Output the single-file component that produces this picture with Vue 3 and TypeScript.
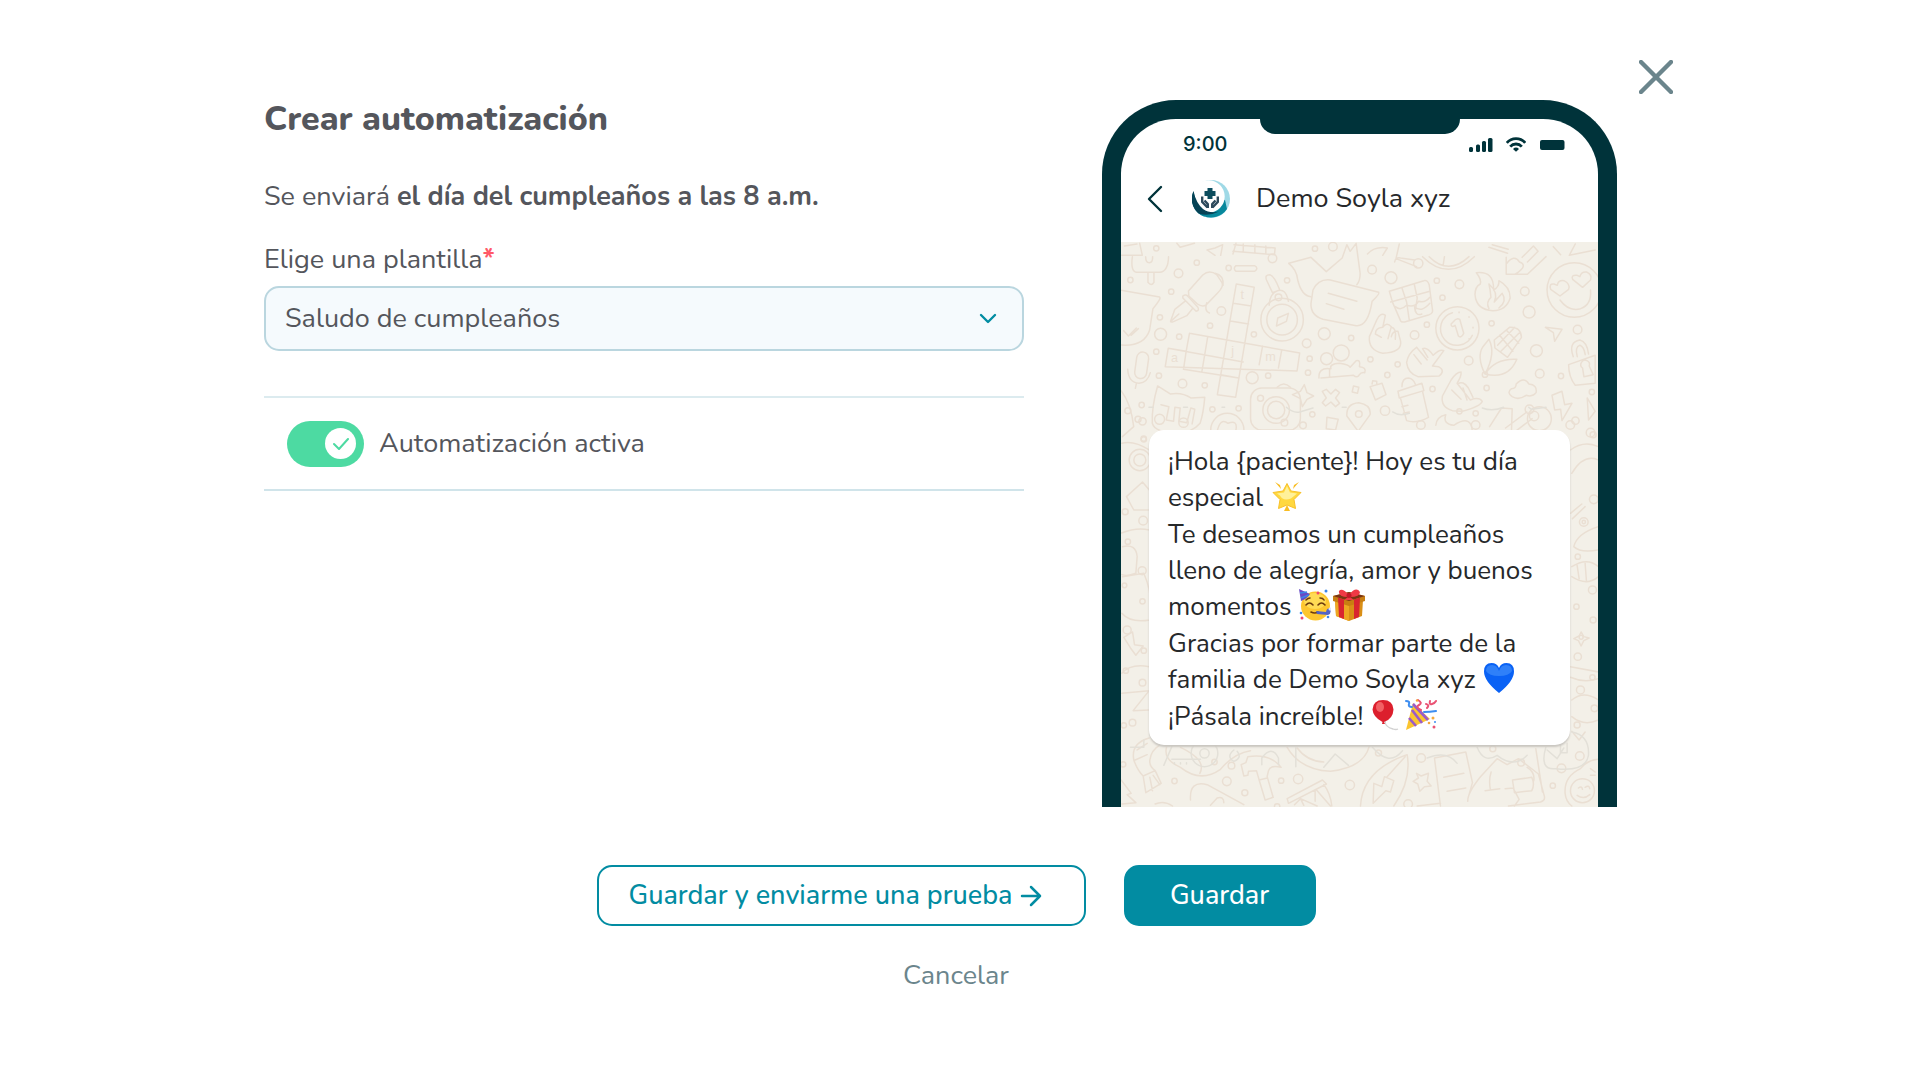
<script setup lang="ts">
import { ref } from 'vue'

interface Dot {
  x: number
  y: number
  r: number
}

const templates: string[] = ['Saludo de cumpleaños']
const selected = ref<string>(templates[0])
const active = ref<boolean>(true)
const clinic = 'Demo Soyla xyz'
const patientTag = '{paciente}'

const toDots = (list: number[][]): Dot[] => list.map(([x, y, r]) => ({ x, y, r }))

const upperDots = toDots([
  [90, 120, 8], [168, 25, 8], [235, 100, 13], [290, 68, 8], [213, 155, 8], [179, 232, 8], [364, 213, 13],
  [330, 257, 8], [181, 283, 18], [237, 290, 8], [168, 335, 8], [176, 407, 8], [247, 431, 13], [314, 436, 8],
  [386, 84, 8], [462, 283, 8], [457, 413, 18], [505, 407, 8], [124, 495, 8], [562, 121, 8], [674, 281, 18],
  [621, 310, 13], [630, 356, 8], [625, 398, 8], [755, 294, 8], [646, 26, 8], [700, 20, 13], [518, 55, 13],
  [818, 89, 13], [875, 113, 18], [1013, 122, 8], [1081, 133, 13], [1030, 173, 8], [983, 254, 8], [946, 285, 13],
  [813, 358, 8], [895, 373, 8], [864, 405, 8], [1000, 447, 8], [1109, 362, 13], [1163, 444, 8], [1178, 250, 8],
  [1278, 154, 13], [1291, 216, 18], [1437, 269, 13], [1313, 332, 18], [1323, 401, 13], [1387, 408, 8],
  [1480, 456, 8], [482, 475, 9], [337, 508, 8], [857, 512, 14], [1130, 520, 8], [1081, 514, 8], [1292, 508, 13],
  [638, 523, 8], [113, 538, 9], [178, 538, 15], [250, 548, 14], [416, 505, 8], [554, 548, 10], [610, 556, 10],
  [1130, 555, 13], [1415, 555, 13], [1476, 578, 13], [965, 555, 13], [130, 596, 8]
])

const lowerDots = toDots([
  [192, 153, 8], [349, 154, 13], [403, 188, 9], [512, 152, 8], [563, 147, 14], [718, 165, 14], [932, 84, 13],
  [893, 222, 13], [1327, 167, 8], [1353, 115, 13], [1408, 78, 13], [1232, 98, 10], [1147, 56, 9], [363, 107, 10],
  [312, 96, 8], [804, 69, 9], [38, 103, 8], [500, 229, 8]
])

const sideDots = toDots([
  [52, 32, 9], [96, 64, 11], [100, 118, 8], [44, 335, 9], [98, 362, 13], [52, 425, 8], [95, 512, 12],
  [42, 556, 7], [96, 604, 8], [50, 690, 12], [100, 752, 8], [46, 812, 8], [96, 848, 10], [66, 968, 10],
  [40, 976, 8], [1395, 62, 11], [1448, 104, 9], [1450, 298, 13], [1420, 366, 13], [1420, 366, 5], [1402, 470, 8],
  [1446, 570, 12], [1398, 620, 8], [1412, 712, 6], [1448, 660, 9], [1402, 770, 11], [1446, 832, 8],
  [1410, 870, 12], [1452, 925, 10], [1400, 975, 9]
])
</script>

<template>
  <main class="page">
    <section class="dialog" aria-labelledby="dialog-title">
      <div class="top">
        <button type="button" class="close" aria-label="Cerrar">
          <svg viewBox="0 0 34 34" width="34" height="34" aria-hidden="true">
            <path d="M2 2 32 32M32 2 2 32" fill="none" stroke="currentColor" stroke-width="4.400" stroke-linecap="round" />
          </svg>
        </button>
      </div>

      <div class="body">
        <form class="form" @submit.prevent>
          <h1 id="dialog-title">Crear automatización</h1>
          <p class="schedule">Se enviará <strong>el día del cumpleaños a las 8 a.m.</strong></p>
          <label class="field-label" for="template">Elige una plantilla<span class="required">*</span></label>
          <div class="select-wrap">
            <select id="template" v-model="selected">
              <option v-for="item in templates" :key="item">{{ item }}</option>
            </select>
            <svg class="caret" viewBox="0 0 18 12" width="18" height="12" aria-hidden="true">
              <path d="M2 2 9 9 16 2" fill="none" stroke="currentColor" stroke-width="2.4" stroke-linecap="round" stroke-linejoin="round" />
            </svg>
          </div>
          <div class="toggle-row">
            <label class="toggle" for="active">
              <input id="active" v-model="active" type="checkbox" role="switch" />
              <span class="knob">
                <svg viewBox="0 0 16 12" width="16" height="12" aria-hidden="true">
                  <path d="M1 6 6 11 15 1" fill="none" stroke="currentColor" stroke-width="2" stroke-linecap="round" stroke-linejoin="round" />
                </svg>
              </span>
            </label>
            <label for="active">Automatización activa</label>
          </div>
        </form>

        <aside class="phone">
          <div class="notch"></div>
          <div class="status">
            <span>9:00</span>
            <svg viewBox="0 0 96 16" width="96" height="16" aria-hidden="true" fill="currentColor">
              <rect x="0" y="11" width="4" height="5" rx="1.500" />
              <rect x="7" y="8.500" width="4" height="7.500" rx="1.500" />
              <rect x="13" y="5" width="4" height="11" rx="1.500" />
              <rect x="19" y="2" width="4.500" height="14" rx="1.500" />
              <g fill="none" stroke="currentColor" stroke-width="2.800">
                <path d="M37.800 6.800a12.200 12.200 0 0 1 18.400 0" />
                <path d="M41.200 10.600a7.800 7.800 0 0 1 11.600 0" />
              </g>
              <path d="M47 15.800 44 12.900a4.400 4.400 0 0 1 6 0z" />
              <rect x="71" y="4" width="24.500" height="10" rx="2" />
            </svg>
          </div>
          <div class="contact">
            <svg class="back" viewBox="0 0 16 28" width="16" height="28" aria-hidden="true">
              <path d="M14 2 2 14 14 26" fill="none" stroke="currentColor" stroke-width="2.400" stroke-linecap="round" stroke-linejoin="round" />
            </svg>
            <svg class="logo" viewBox="0 0 38 38" width="38" height="38" aria-hidden="true">
              <circle cx="19" cy="19" r="19" fill="#9fd9e6" />
              <path d="M1 13A19 19 0 0 0 35 29L33 20 16 16Z" fill="#07889c" />
              <circle cx="16.500" cy="16.500" r="16.200" fill="#fff" />
              <path d="M1.500 11.500A19 19 0 0 0 12 36.600L26 32Q33 26 33.500 21 32 33 20 34 5 33 1.500 11.500Z" fill="#07889c" />
              <path d="M1.500 11A19 19 0 0 0 6.500 33.500Q16 37 27 31.500 18 34 11 29 4 23 1.500 11Z" fill="#064356" />
              <path d="M15.500 8h5v3h3v5h-3v3h-5v-3h-3v-5h3z" fill="#0c4d5e" />
              <g fill="none" stroke="#2d4a5c" stroke-width="2.400" stroke-linejoin="round">
                <path d="M10.200 16.500v5.500l5.300 5.500M15.800 28v-4l-3.300-3.500" />
                <path d="M25.800 16.500v5.500l-5.300 5.500M20.200 28v-4l3.300-3.500" />
              </g>
            </svg>
            <span>{{ clinic }}</span>
          </div>

          <div class="chat">
            <svg class="wallpaper" viewBox="0 0 478 565" preserveAspectRatio="xMidYMin slice" aria-hidden="true">
              <g fill="none" stroke="#eadfd3" stroke-width="4.500" stroke-linejoin="round" stroke-linecap="round" font-family="Liberation Sans, sans-serif">
                <g transform="translate(-20 -2) scale(.332 .3333)">
                  <circle v-for="(d, i) in upperDots" :key="i" :cx="d.x" :cy="d.y" :r="d.r" />
                  <path d="M62 46H126L118 10M72 18 110 12M230 10 240 22 283 10M321 30 345 24 368 14 362 46M321 30 345 46M408 10 399 42 M399 34 524 44 526 24 402 14 M430 12v24M465 14v24M498 18v22" />
                  <path d="M96 50Q90 94 108 97L178 97Q204 94 205 50M136 50q0 18 11 18t10-18M143 97v30q10 13 18 0V97" />
                  <path d="M62 151 178 171Q184 176 158 206L148 270Q132 320 62 315M70 272l14 16 24-24M92 286l22-20" />
                  <path d="M265 153 308 105Q328 88 350 104L366 128Q372 140 352 160L318 195Q306 202 292 192L266 168ZM345 100Q372 106 369 136M320 188Q312 214 328 219" />
                  <path d="M248 168q10-8 18 4l26 28q8 12-4 14l-40-40ZM254 184l-30 24-13 36q2 4 9 1l40-18 18-22M214 242l22-20" />
                  <path d="M409 132 463 142 407 472 352 464ZM400 190 454 198M391 243 446 252M362 404 416 414M268 280 436 310 600 339 592 393 195 380 204 325 430 366M204 325 258 334 268 280M323 290 305 397M258 334 250 388M488 319 478 374M546 329 536 384M250 388 416 414" />
                  <circle cx="547" cy="239" r="64" /><circle cx="547" cy="239" r="46" /><circle cx="536" cy="172" r="10" />
                  <path d="M508 196Q510 160 534 152T566 184M500 120Q494 104 510 104 524 108 540 150L518 158ZM530 258 534 234 566 220 560 244ZM408 77h56q14 8 0 17h-56q-10-8 0-17Z" />
                  <path d="M567 70 634 52 680 95 728 54 742 14 752 34 770 10 782 100Q782 124 772 134M567 70Q592 90 594 120 606 168 634 170" />
                  <path d="M640 150Q656 116 692 120L838 157Q842 162 818 184 806 260 770 257L670 238Q632 226 634 190ZM686 160 772 184M680 191 733 208" />
                  <path d="M870 154 974 122Q984 118 990 134L1000 210Q1002 220 990 224L916 246Q904 248 902 238L880 188ZM908 144 922 186 930 240M945 132 954 174 948 214M874 186 992 154M888 200q16 14 34-4 24 8 36-12 20 6 34-12M946 200q20 20 46-10M946 200q2 30 22 22" />
                  <path d="M804 42Q826 18 864 24L850 46M900 12 890 56 952 80M886 66Q888 50 904 54L946 60M970 50Q1048 126 1126 50M990 50Q1048 108 1110 50M1036 50 1032 76" /><circle cx="957" cy="70" r="14" />
                  <path d="M1132 98Q1186 92 1184 150 1202 140 1200 122 1234 140 1234 174 1222 212 1182 212 1132 210 1128 164 1128 140 1144 132 1148 118 1132 98ZM1170 206Q1160 186 1176 172 1174 148 1170 132 1200 158 1186 186L1210 160Q1226 184 1200 204" />
                  <path d="M1170 22 1226 40M1180 14 1228 28M1222 52V103H1286L1342 50M1224 70Q1246 42 1262 66 1290 76 1250 102M1270 52 1304 18 1318 34 1286 66M1364 20 1386 44M1430 12 1412 46 1490 30" />
                  <circle cx="1427" cy="150" r="82" /><path d="M1384 180Q1410 216 1446 206 1480 194 1476 150M1384 168 1356 148Q1350 130 1366 132L1376 136Q1378 120 1396 122 1416 132 1410 148ZM1452 142 1422 118Q1416 104 1436 106L1444 110Q1448 94 1464 96 1482 104 1476 120Z" />
                  <path d="M858 226Q842 216 832 240L810 290Q806 330 850 340 908 338 904 304L896 274Q880 272 876 290M858 226 850 262Q828 264 828 282L846 292M850 262Q862 244 876 260L866 296M876 262Q892 264 888 298" />
                  <circle cx="1075" cy="265" r="65" /><path d="M1120 286A50 50 0 1 1 1060 218M1110 230v2M1122 262v2M1110 296v2M1080 216v2M1062 246Q1072 232 1082 238L1094 280Q1086 296 1078 288L1068 256Q1056 264 1056 252Z" />
                  <path d="M1158 402Q1132 350 1152 320L1170 298Q1192 340 1158 402ZM1158 402Q1190 354 1254 358 1228 420 1158 402ZM1186 300 1232 262Q1266 260 1268 292L1226 352 1188 324ZM1196 316 1248 262M1206 334 1264 276M1202 286 1242 334M1222 270 1260 310" /><circle cx="1158" cy="404" r="8" />
                  <path d="M1340 262 1390 268 1368 304 1364 278ZM1410 374 1490 346V430L1430 436Q1410 410 1410 374ZM1424 350Q1408 306 1444 300 1466 306 1470 342M1436 350Q1428 320 1444 316 1456 320 1460 344M1452 384a13 13 0 1 1 20-6l12 26-28 6z" />
                  <rect x="106" y="336" width="36" height="80" rx="18" transform="rotate(8 124 376)" /><path d="M82 388Q84 428 116 430 142 428 150 398M108 431l-3 14" />
                  <circle cx="681" cy="356" r="18" /><circle cx="725" cy="339" r="24" /><path d="M658 414Q656 384 688 386H694Q688 372 720 370 748 374 752 382L770 362Q784 358 780 380 802 382 796 398 784 396 780 404 774 416 762 406L664 414M690 388v24" />
                  <path d="M952 322Q926 340 922 368 926 400 956 410L1020 408Q1040 392 1018 380L1000 378 1034 332Q1022 326 1002 346 984 320 970 326L986 352M952 322 984 360M944 344 966 372M1040 370" />
                  <path d="M1086 396Q1072 396 1056 420L1030 468Q1024 502 1060 512L1090 514Q1144 500 1150 484 1140 470 1114 480L1074 430Q1088 408 1086 396M1058 450 1086 478M1076 432Q1092 420 1108 444L1122 472M1092 444 1104 480" />
                  <path d="M172 438 210 462Q246 456 272 474L314 472Q310 520 300 550 276 578 230 580 164 578 156 550 154 500 172 438ZM182 494l24 6-8 40 22 4 4-42 16 2-4 40 24 4 12-44 12 4-8 44" />
                  <rect x="452" y="444" width="150" height="126" rx="34" /><circle cx="529" cy="510" r="40" /><circle cx="529" cy="510" r="26" /><path d="M532 442q20-20 40 0M578 464l24-10 12-20 8 24 20 10-20 10-14 22-6-24z" />
                  <path d="M668 454 680 448 694 462 708 448 720 458 708 474 720 490 708 500 694 486 678 498 668 488 680 474ZM762 438 778 442 774 460 758 456ZM812 440 848 430 860 464 828 480ZM818 432l2-10 12 2v10" />
                  <path d="M896 454 968 430 974 452 900 474ZM908 440Q908 414 928 414 942 416 948 432M904 476 922 542Q950 552 988 532L970 454M908 500l18-4M912 520l18-4" />
                  <path d="M1240 470Q1222 458 1238 446 1252 446 1252 432 1276 408 1290 432 1316 434 1312 458 1302 472 1282 466 1260 482 1240 470ZM1360 466 1390 454 1398 494 1420 490 1390 542 1386 508 1368 510ZM1466 474 1490 514 1470 540Z" />
                  <circle cx="382" cy="570" r="50" /><path d="M350 580q10-50 34-30 30-12 24 20M776 574 742 528Q740 490 778 488 816 494 812 524ZM682 532 716 538 708 570 680 566ZM62 452Q92 490 100 560L66 590M1010 556Q1012 530 1040 524 1030 552 1064 556 1120 520 1120 580M1172 560 1208 504 1240 506 1238 570M1220 564 1284 516M1250 574 1300 536" /><circle cx="778" cy="522" r="10" /><circle cx="1322" cy="536" r="36" /><circle cx="1306" cy="528" r="14" />
                  <g stroke="#e3e0d8"><path d="M146 502h12M250 502h12M366 502h8M560 502Q580 520 600 516L640 504M728 502h12M880 516Q900 530 930 520M1150 504Q1180 516 1214 502M1290 502l8 6 44-6" /></g>
                  <g fill="#eadfd3" stroke="none" font-size="38"><text x="422" y="178">t</text><text x="394" y="344">j</text><text x="212" y="366">a</text><text x="496" y="362">m</text></g>
                </g>
                <g transform="translate(-10 158) scale(.3333)">
                  <circle v-for="(d, i) in sideDots" :key="i" :cx="d.x" :cy="d.y" :r="d.r" />
                  <circle cx="88" cy="180" r="32" /><circle cx="88" cy="180" r="18" />
                  <path d="M34 130Q70 120 116 150M48 290 96 246 130 286V330H70ZM30 400Q80 380 116 390M36 440Q76 430 80 470L76 520Q50 530 34 524M36 530 100 520Q130 590 118 660 60 670 34 640M40 712 66 696 72 734 98 738 76 766 60 744ZM34 880 116 872 68 932 116 930M34 820Q60 790 116 800" />
                  <path d="M1380 150Q1420 120 1464 140M1384 220Q1420 160 1464 180M1380 340 1414 312M1386 356 1424 320M1464 380Q1400 400 1390 440 1410 460 1464 450M1384 500Q1430 470 1464 500M1384 530Q1430 560 1464 530M1400 496l6 40M1424 490l4 54M1412 696l8 14 16 4-16 8-8 16-8-16-14-6 16-8ZM1380 800 1464 816M1380 832Q1420 850 1464 836M1384 900Q1420 870 1464 900V960Q1420 980 1384 950" />
                </g>
                <g transform="translate(-10 488) scale(.3333)">
                  <circle v-for="(d, i) in lowerDots" :key="i" :cx="d.x" :cy="d.y" :r="d.r" />
                  <path d="M116 24Q60 40 70 90 80 120 98 138L106 188 152 160 134 122Q116 110 118 90 122 60 150 44M80 60 110 40M74 90 110 74M98 138 134 122M118 142l8 40M128 136l20 28" />
                  <path d="M168 52Q158 90 210 112 270 160 330 118 370 70 420 62M210 52Q290 90 268 130M32 150 62 190 50 194 76 218 34 222M240 210Q236 150 290 164L400 224M300 226l20-22q20-6 20 14M134 222Q160 210 186 228" />
                  <path d="M392 104 406 98 412 80Q480 70 512 112 480 104 474 122L470 140 488 202 464 210 446 150 438 122 414 124 412 136 400 138ZM446 150l24-6M530 52Q570 120 660 124 760 112 776 50M560 54Q590 94 640 96M530 206 636 150 648 162 534 220ZM552 224 570 206 620 228M570 206 580 226M618 180 660 228M640 164Q660 190 664 228M614 182V214" />
                  <path d="M750 228Q756 120 890 74 904 150 850 228M788 220 790 160 814 170 822 140 850 152 840 186 826 182ZM830 140 884 80M918 130l14 8 22-8-4 24 12 14-20 2-14 14-6-22-14-8 16-10ZM972 84 1066 66 1086 158 1074 200M972 84 990 228M1000 142 1060 130M1010 184 1066 174M920 228l70-8M1072 214Q1070 190 1110 140L1160 86 1190 104 1224 86 1284 132 1302 200Q1304 212 1290 216L1194 228M1140 180Q1134 150 1142 126M1124 182l44-6M1184 176l24-2 18 34-14 20M1206 150l58-8q10 20 0 40l-52 6zM1250 112q24 14 20 40M1276 56l20 130" />
                  <circle cx="1416" cy="182" r="36" /><path d="M1464 88Q1430 90 1410 116 1360 140 1364 190 1366 214 1384 228M1404 174q10-8 12 4M1424 172q12-8 14 4M1400 196q20 14 38-2M1440 116l14 10M1440 136h14M1384 4l22 26 18-24" />
                  <g stroke="#e3e0d8"><path d="M60 52h40v-22M160 106 184 50M184 88H270M192 98v4M210 98v4M228 98v4M370 60q-24 20 0 34 26-10 10-30M454 104V84q30-40 50 0v20M556 54v56M640 112l34-40 40 34M786 52q50 60 90 10M950 84q60-24 90 16M1100 52q20 50 60 24 50 40 90 0M1306 52q-20 70 30 64 90 10 98-40 4-60-50-70M1310 60l30 26 20-32M1350 44v24h20V40" /><circle cx="282" cy="70" r="40" /><circle cx="282" cy="70" r="14" /></g>
                </g>
              </g>
            </svg>

            <div class="bubble">
              <p>¡Hola {{ patientTag }}! Hoy es tu día especial
                <svg class="emoji" viewBox="0 0 32 32" role="img" aria-label="estrella brillante">
                  <g fill="#f9bd22"><path d="m4 2 5 3 1 4zM28 2l-5 3-1 4zM16 25l-3 6h6z" /></g>
                  <path d="M16 3.500 20 11l10 1.500-7 7 1.500 9L16 25l-8.500 3.500L9 19.500l-7-7L12 11z" fill="#ffd83f" stroke="#f8c12b" stroke-linejoin="round" />
                  <path d="M16 6 19 12.500l7 1-6 5q-8 3-11-3l-3-2 7-1z" fill="#fff19a" />
                </svg>
              </p>
              <p>Te deseamos un cumpleaños lleno de alegría, amor y buenos momentos
                <svg class="emoji" viewBox="0 0 32 32" role="img" aria-label="cara de fiesta">
                  <circle cx="16.500" cy="17" r="14.500" fill="#fdc62f" /><ellipse cx="16" cy="12" rx="11" ry="8" fill="#ffdb55" />
                  <path d="M0 0 11 5Q8 10 2 12z" fill="#6a4bc4" /><path d="m1 4 7-1M2 9l8-3" stroke="#3b86e8" stroke-width="1.500" />
                  <g fill="none" stroke="#6d3b0e" stroke-width="1.600" stroke-linecap="round"><path d="M7 16q3.500-4 7 0M19 16q3.500-4 7 0M7 11q2-2 4-2M21 9q3 0 4 2M12 23q4 2 7 0" /></g>
                  <path d="m17 22 10 1q1-5 4-3 2 4-2 6l-11-1z" fill="#5263c7" /><circle cx="31" cy="20" r="1.500" fill="#dce3ff" />
                  <g fill="#ef476f"><circle cx="19" cy="4" r="1.500" /><circle cx="3" cy="29" r="1.500" /></g><g fill="#3b86e8"><circle cx="27" cy="2" r="1.500" /><circle cx="2" cy="24" r="1.300" /><circle cx="29" cy="28" r="1.300" /></g>
                </svg><svg class="emoji" viewBox="0 0 32 32" role="img" aria-label="regalo">
                  <path d="M2 11 16 15v17L3 27zM30 11 16 15v17l13-5z" fill="#d98f16" /><path d="M2 11 16 15v17L3 27z" fill="#eda722" />
                  <path d="M0 7 16 3l16 4v5l-16 5L0 12z" fill="#c87e12" /><path d="M0 7 16 3l16 4-16 5z" fill="#7a3414" />
                  <path d="m5 8.500 6 2V30l-5-2zM27 8.500l-6 2V30l5-2z" fill="#d9262f" />
                  <path d="M16 6Q9-2 6 2 5 8 15 8L11 11h10l-4-3q10 0 10-5-4-6-11 3z" fill="#ef3945" /><circle cx="16" cy="6.500" r="2.500" fill="#c21728" />
                </svg>
              </p>
              <p>Gracias por formar parte de la familia de {{ clinic }}
                <svg class="emoji" viewBox="0 0 32 32" role="img" aria-label="corazón azul">
                  <path d="M16 31Q1 19 1 9.500 1 1 8.500 1 14 1 16 6 18 1 23.500 1 31 1 31 9.500 31 19 16 31Z" fill="#0a62f5" />
                  <path d="M3 9Q3 3 9 3q5 0 7 6 2-6 7-6 6 0 6 6-3 5-13 5T3 9Z" fill="#2f80f9" />
                </svg>
              </p>
              <p>¡Pásala increíble!
                <svg class="emoji" viewBox="0 0 32 32" role="img" aria-label="globo">
                  <path d="M14 22q0 6 8 8 3 1 5 0" fill="none" stroke="#d2d2d2" stroke-width="1.300" />
                  <path d="M12 1q10 0 10.500 9.500Q22 20 13 23l1 2h-3l.500-2Q2 18 1.500 10.500 2 1 12 1Z" fill="#dc1f2d" /><ellipse cx="9" cy="8" rx="4" ry="5" fill="#f26064" />
                </svg><svg class="emoji" viewBox="0 0 32 32" role="img" aria-label="confeti">
                  <path d="M8 4 25 20 1 31z" fill="#fbc52f" /><path d="m7 11 10 13M4 19l7 8M8 5 23 21" stroke="#9a5bc9" stroke-width="2.600" />
                  <g fill="none" stroke-width="2" stroke-linecap="round"><path d="M19 13q6 0 12-1M1 2q4 0 3 3t3 3" stroke="#3d8df0" /><path d="M13 1q5 3 1 5t2 5M25 2q-1 4 2 3t4-3M21 5q4 1 1 4" stroke="#ea5374" /></g>
                  <g fill="#f6a83b"><circle cx="28" cy="19" r="1.500" /><circle cx="24" cy="24" r="1.300" /><circle cx="12" cy="1.500" r="1.200" /></g><circle cx="29" cy="28" r="1.500" fill="#ea5374" /><circle cx="30" cy="23" r="1" fill="#3d8df0" />
                </svg>
              </p>
            </div>
          </div>
        </aside>
      </div>

      <div class="actions">
        <button type="button" class="btn outline">
          Guardar y enviarme una prueba
          <svg viewBox="0 0 22 22" width="22" height="22" aria-hidden="true">
            <path d="M2 11H20M11 2 20 11 11 20" fill="none" stroke="currentColor" stroke-width="2.500" stroke-linecap="round" stroke-linejoin="round" />
          </svg>
        </button>
        <button type="button" class="btn filled">Guardar</button>
      </div>
      <button type="button" class="cancel">Cancelar</button>
    </section>
  </main>
</template>

<style>
body {
  margin: 0;
  background: #fff;
}
</style>

<style scoped>
.page {
  display: flex;
  justify-content: center;
  padding: 60px 8px 60px 0;
  box-sizing: border-box;
  color: #54565c;
  font-family: Nunito, Lato, "Noto Sans", sans-serif;
  font-size: 27px;
  line-height: 36px;
}
.dialog {
  display: flex;
  flex-direction: column;
  width: 100%;
  max-width: 1434px;
}
button,
select {
  font: inherit;
}
button {
  cursor: pointer;
}
h1,
p {
  margin: 0;
}
.top {
  display: flex;
  justify-content: flex-end;
}
.close {
  display: flex;
  padding: 0;
  border: 0;
  background: none;
  color: #6b858c;
}
.body {
  display: grid;
  grid-template-columns: minmax(0, 1fr) 515px;
  gap: 78px;
  margin-top: 6px;
  padding: 0 56px 0 25px;
}
.form {
  display: flex;
  flex-direction: column;
}
h1 {
  font-size: 34px;
  line-height: 38px;
  font-weight: 800;
}
.schedule {
  margin-top: 41px;
}
.field-label {
  margin-top: 27px;
}
.required {
  color: #ff5a68;
  font-weight: 700;
}
.select-wrap {
  display: grid;
  align-items: center;
  margin-top: 8px;
}
.select-wrap > * {
  grid-area: 1 / 1;
}
select {
  appearance: none;
  width: 100%;
  height: 65px;
  padding: 1px 60px 0 19px;
  border: 2px solid #bad6df;
  border-radius: 15px;
  background: #f5fafd;
  color: #54565c;
}
.caret {
  justify-self: end;
  margin-right: 27px;
  color: #028ca2;
  pointer-events: none;
}
.toggle-row {
  display: flex;
  align-items: center;
  gap: 15px;
  height: 91px;
  margin-top: 45px;
  padding-left: 23px;
  border-top: 2px solid #dcebef;
  border-bottom: 2px solid #d0e4ea;
}
.toggle {
  display: grid;
  align-items: center;
  cursor: pointer;
}
.toggle > * {
  grid-area: 1 / 1;
}
.toggle input {
  appearance: none;
  width: 77px;
  height: 46px;
  margin: 0;
  border-radius: 23px;
  background: #c4cfd2;
}
.toggle input:checked {
  background: #4ddaa2;
}
.knob {
  display: flex;
  align-items: center;
  justify-content: center;
  width: 31px;
  height: 31px;
  margin-left: 8px;
  border-radius: 50%;
  background: #fff;
  color: #4ddaa2;
}
.toggle input:checked + .knob {
  margin-left: 38px;
}
.phone {
  display: flex;
  flex-direction: column;
  box-sizing: border-box;
  overflow: hidden;
  border: 19px solid #00333a;
  border-bottom: 0;
  border-radius: 74px 74px 0 0;
  background: #fff;
}
.notch {
  align-self: center;
  width: 200px;
  height: 15px;
  border-radius: 0 0 18px 18px;
  background: #00333a;
}
.status {
  display: flex;
  align-items: center;
  justify-content: space-between;
  height: 20px;
  padding: 0 33px 0 62px;
  color: #00333a;
  font-family: Inter, sans-serif;
  font-size: 20px;
  font-weight: 500;
  line-height: 20px;
}
.contact {
  display: flex;
  align-items: center;
  box-sizing: border-box;
  height: 88px;
  padding: 2px 0 0 26px;
  color: #26282a;
}
.back {
  color: #00333a;
}
.logo {
  margin: 0 26px 0 29px;
}
.chat {
  position: relative;
  flex: 1;
  padding: 188px 28px 62px;
  background: #f3f0e8;
}
.wallpaper {
  position: absolute;
  inset: 0;
  width: 100%;
  height: 100%;
}
.bubble {
  display: grid;
  gap: 1px;
  position: relative;
  padding: 14px 19px 10px;
  border-radius: 15px;
  background: #fff;
  box-shadow: 0 2px 2px #c9c6c0;
  color: #26282a;
  font-size: 26px;
}
.emoji {
  width: 32px;
  height: 32px;
  margin: -4px 1px;
  vertical-align: -2px;
}
.actions {
  display: flex;
  justify-content: center;
  gap: 38px;
  margin-top: 58px;
}
.btn {
  display: flex;
  align-items: center;
  justify-content: center;
  gap: 8px;
  box-sizing: border-box;
  height: 61px;
  border: 2px solid #028ca2;
  border-radius: 15px;
  font-weight: 500;
}
.outline {
  justify-content: flex-start;
  width: 489px;
  padding: 0 30px;
  background: #fff;
  color: #028ca2;
}
.filled {
  width: 192px;
  background: #028ca2;
  color: #fff;
}
.cancel {
  align-self: center;
  margin-top: 32px;
  padding: 0;
  border: 0;
  background: none;
  color: #6b858c;
}
</style>
